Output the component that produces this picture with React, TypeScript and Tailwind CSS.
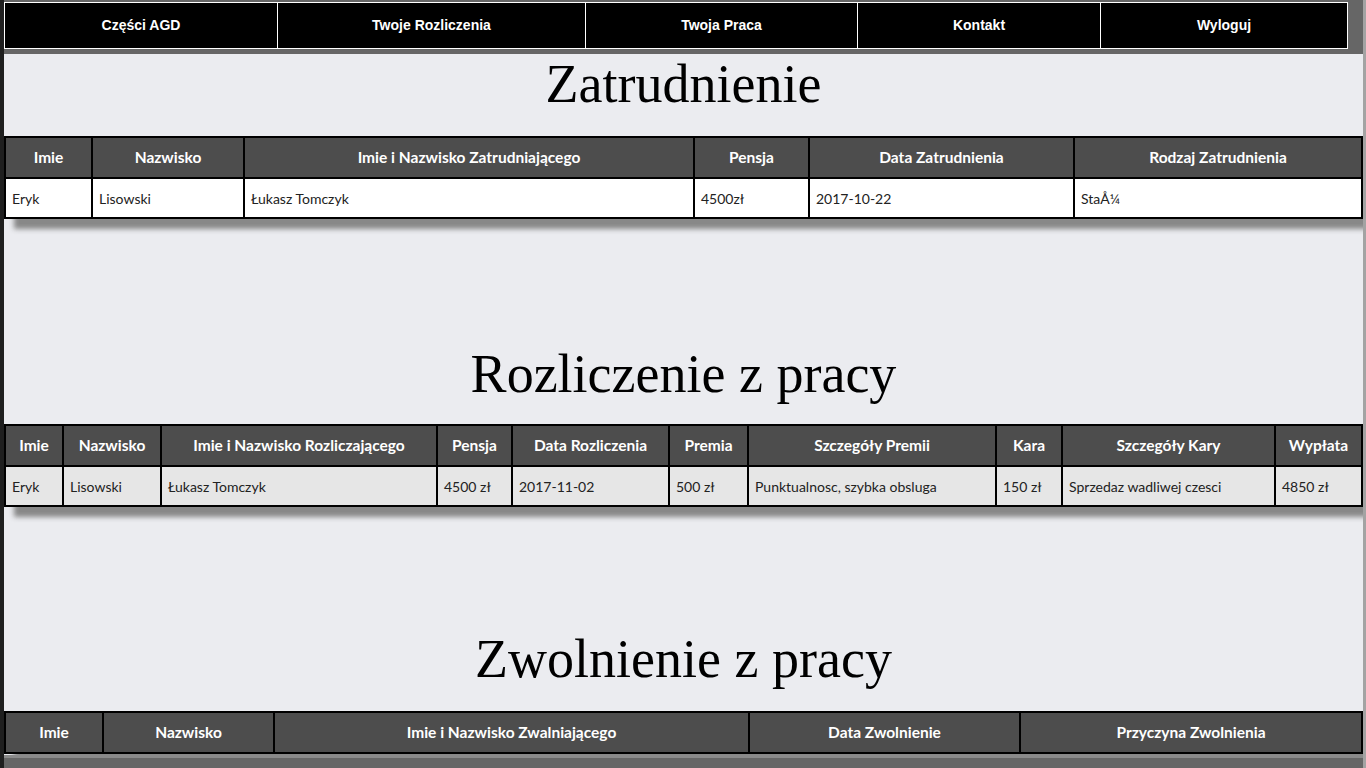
const navItems = [
  { label: "Części AGD", w: "w-[272px]" },
  { label: "Twoje Rozliczenia", w: "w-[308px]" },
  { label: "Twoja Praca", w: "w-[272px]" },
  { label: "Kontakt", w: "w-[243px]" },
  { label: "Wyloguj", w: "" },
];

type Col = { title: string; w: string };

const zatrudnienieCols: Col[] = [
  { title: "Imie", w: "w-[87px]" },
  { title: "Nazwisko", w: "w-[152px]" },
  { title: "Imie i Nazwisko Zatrudniającego", w: "w-[450px]" },
  { title: "Pensja", w: "w-[115px]" },
  { title: "Data Zatrudnienia", w: "w-[265px]" },
  { title: "Rodzaj Zatrudnienia", w: "" },
];
const zatrudnienieRow = ["Eryk", "Lisowski", "Łukasz Tomczyk", "4500zł", "2017-10-22", "StaÅ¼"];

const rozliczenieCols: Col[] = [
  { title: "Imie", w: "w-[58px]" },
  { title: "Nazwisko", w: "w-[98px]" },
  { title: "Imie i Nazwisko Rozliczającego", w: "w-[276px]" },
  { title: "Pensja", w: "w-[75px]" },
  { title: "Data Rozliczenia", w: "w-[157px]" },
  { title: "Premia", w: "w-[79px]" },
  { title: "Szczegóły Premii", w: "w-[248px]" },
  { title: "Kara", w: "w-[66px]" },
  { title: "Szczegóły Kary", w: "w-[213px]" },
  { title: "Wypłata", w: "" },
];
const rozliczenieRow = [
  "Eryk",
  "Lisowski",
  "Łukasz Tomczyk",
  "4500 zł",
  "2017-11-02",
  "500 zł",
  "Punktualnosc, szybka obsluga",
  "150 zł",
  "Sprzedaz wadliwej czesci",
  "4850 zł",
];

const zwolnienieCols: Col[] = [
  { title: "Imie", w: "w-[98px]" },
  { title: "Nazwisko", w: "w-[171px]" },
  { title: "Imie i Nazwisko Zwalniającego", w: "w-[475px]" },
  { title: "Data Zwolnienie", w: "w-[271px]" },
  { title: "Przyczyna Zwolnienia", w: "" },
];

function DataTable({ cols, row, rowBg }: { cols: Col[]; row?: string[]; rowBg?: string }) {
  return (
    <table className="w-full table-fixed border-collapse shadow-[10px_10px_5px_#888] font-['Lato',sans-serif] text-[14px]">
      <thead>
        <tr className="h-[41px] bg-[#4d4d4d]">
          {cols.map((c) => (
            <th key={c.title} className={`${c.w} border-2 border-black text-center text-[15.5px] font-bold text-white`}>
              {c.title}
            </th>
          ))}
        </tr>
      </thead>
      {row && (
        <tbody>
          <tr className={`h-[40px] ${rowBg}`}>
            {row.map((v, i) => (
              <td key={i} className="border-2 border-black px-[6px] text-left text-[#222]">
                {v}
              </td>
            ))}
          </tr>
        </tbody>
      )}
    </table>
  );
}

// headings: serif, big, centered
const headingCls = "text-center font-['Liberation_Serif',serif] text-[54px] leading-[60px] text-black";

export default function App() {
  return (
    <div className="flex h-[768px] w-full overflow-hidden bg-[#a3a3a3]">
      <div className="w-[4px] bg-[#1f1f1f]" />
      <div className="flex w-[1359px] flex-col">
        <div className="bg-[#666] pt-[2px] pb-[5px]">
          <nav className="flex h-[47px] w-[1344px] border border-white bg-black font-['Liberation_Sans',Arial,sans-serif] text-[14px] font-bold text-white">
            {navItems.map((n, i) => (
              <a
                key={n.label}
                href="#"
                className={`flex ${n.w || "flex-1"} items-center justify-center ${i > 0 ? "border-l border-white" : ""}`}
              >
                {n.label}
              </a>
            ))}
          </nav>
        </div>

        <main className="flex-1 overflow-hidden bg-[#ebecf0]">
          <h1 className={headingCls}>Zatrudnienie</h1>
          <div className="mt-[22px]">
            <DataTable cols={zatrudnienieCols} row={zatrudnienieRow} rowBg="bg-white" />
          </div>

          <h1 className={`mt-[125px] ${headingCls}`}>Rozliczenie z pracy</h1>
          <div className="mt-[20px]">
            <DataTable cols={rozliczenieCols} row={rozliczenieRow} rowBg="bg-[#e6e6e6]" />
          </div>

          <h1 className={`mt-[122px] ${headingCls}`}>Zwolnienie z pracy</h1>
          <div className="mt-[22px]">
            <DataTable cols={zwolnienieCols} />
          </div>
        </main>

        <div className="h-[13px] border-t-[3px] border-[#8a8a8a] bg-[#666]" />
      </div>
    </div>
  );
}
